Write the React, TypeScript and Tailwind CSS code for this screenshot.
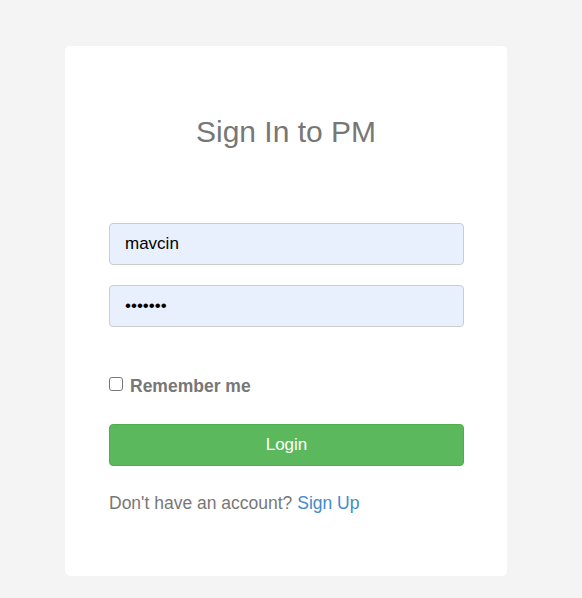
export default function App() {
  return (
    <div
      className="min-h-[598px] w-full bg-[#f4f4f4] pt-[46px] pl-[65px]"
      style={{ fontFamily: '"Liberation Sans", Arial, sans-serif' }}
    >
      <div className="w-[442px] rounded-[5px] bg-white px-[44px] pt-[68px] pb-[61px]">
        <h2 className="h-[36px] text-center text-[30px] leading-[36px] text-[#777]">
          Sign In to PM
        </h2>

        <form className="mt-[73px]" onSubmit={(e) => e.preventDefault()}>
          <input
            type="text"
            defaultValue="mavcin"
            className="block h-[42px] w-[355px] rounded-[4px] border border-[#ccc] bg-[#e8f0fe] px-[15px] text-[17px] text-black outline-none"
          />
          <input
            type="password"
            defaultValue="1234567"
            className="mt-[20px] block h-[42px] w-[355px] rounded-[4px] border border-[#ccc] bg-[#e8f0fe] px-[15px] text-[17px] text-black outline-none"
          />

          {/* Remember me */}
          <label className="mt-[47px] flex h-[24px] items-center gap-[7px]">
            <span className="mb-[4px] block h-[14px] w-[14px] rounded-[3px] border border-[#767676] bg-white" />
            <span className="text-[17.5px] font-bold text-[#777]">Remember me</span>
          </label>

          <button
            type="submit"
            className="mt-[26px] block h-[42px] w-[355px] rounded-[4px] border border-[#4cae4c] bg-[#5cb85c] text-[17px] text-white"
          >
            Login
          </button>
        </form>

        <p className="mt-[25px] h-[24px] text-[17.5px] leading-[24px] text-[#777]">
          Don't have an account? <a className="text-[#428bca]">Sign Up</a>
        </p>
      </div>
    </div>
  );
}
